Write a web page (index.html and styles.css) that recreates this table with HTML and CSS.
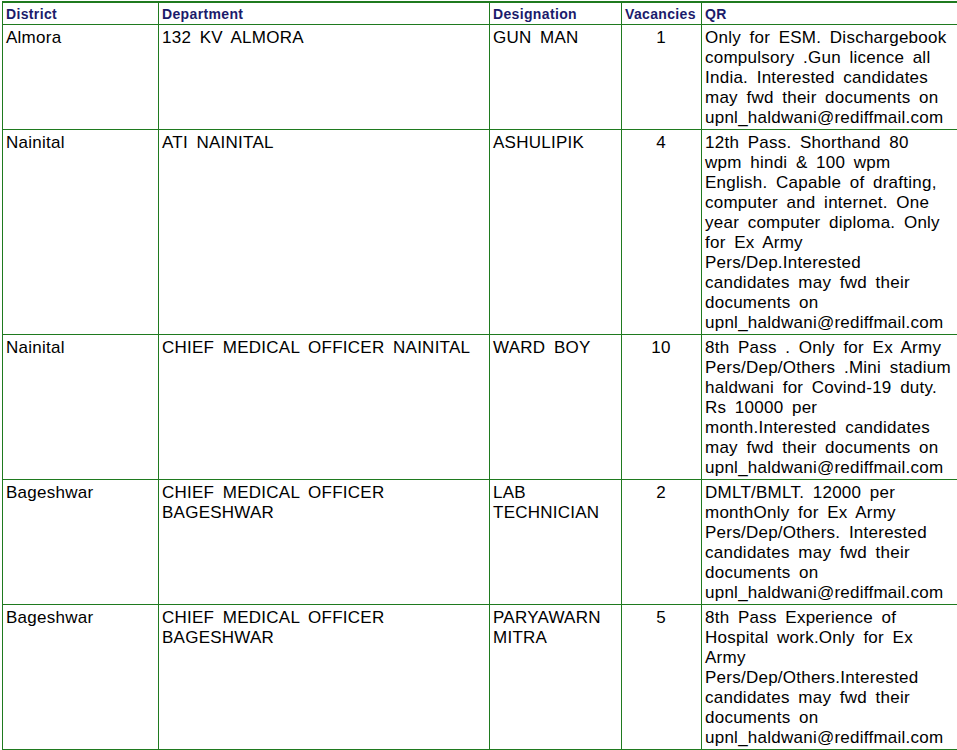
FILE: index.html
```html
<!DOCTYPE html>
<html lang="en">
<head>
<meta charset="utf-8">
<title>Vacancies</title>
<link rel="stylesheet" href="styles.css">
</head>
<body>
<table class="jobs">
  <thead>
    <tr>
      <th class="c-district">District</th>
      <th class="c-dept">Department</th>
      <th class="c-desig">Designation</th>
      <th class="c-vac">Vacancies</th>
      <th class="c-qr">QR</th>
    </tr>
  </thead>
  <tbody>
    <tr>
      <td>Almora</td>
      <td>132 KV ALMORA</td>
      <td>GUN MAN</td>
      <td class="num">1</td>
      <td>Only for ESM. Dischargebook compulsory .Gun licence all India. Interested candidates may fwd their documents on upnl_haldwani@rediffmail.com</td>
    </tr>
    <tr>
      <td>Nainital</td>
      <td>ATI NAINITAL</td>
      <td>ASHULIPIK</td>
      <td class="num">4</td>
      <td>12th Pass. Shorthand 80 wpm hindi &amp; 100 wpm English. Capable of drafting, computer and internet. One year computer diploma. Only for Ex Army Pers/Dep.Interested candidates may fwd their documents on upnl_haldwani@rediffmail.com</td>
    </tr>
    <tr>
      <td>Nainital</td>
      <td>CHIEF MEDICAL OFFICER NAINITAL</td>
      <td>WARD BOY</td>
      <td class="num">10</td>
      <td>8th Pass . Only for Ex Army Pers/Dep/Others .Mini stadium haldwani for Covind-19 duty. Rs 10000 per month.Interested candidates may fwd their documents on upnl_haldwani@rediffmail.com</td>
    </tr>
    <tr>
      <td>Bageshwar</td>
      <td>CHIEF MEDICAL OFFICER BAGESHWAR</td>
      <td>LAB TECHNICIAN</td>
      <td class="num">2</td>
      <td>DMLT/BMLT. 12000 per monthOnly for Ex Army Pers/Dep/Others. Interested candidates may fwd their documents on upnl_haldwani@rediffmail.com</td>
    </tr>
    <tr>
      <td>Bageshwar</td>
      <td>CHIEF MEDICAL OFFICER BAGESHWAR</td>
      <td>PARYAWARN MITRA</td>
      <td class="num">5</td>
      <td>8th Pass Experience of Hospital work.Only for Ex Army Pers/Dep/Others.Interested candidates may fwd their documents on upnl_haldwani@rediffmail.com</td>
    </tr>
  </tbody>
</table>
</body>
</html>
```
FILE: styles.css
```css
html, body {
  margin: 0;
  padding: 0;
  background: #ffffff;
  overflow: hidden;
}

.jobs {
  margin: 1px 0 0 2px;
  width: 955px;
  table-layout: fixed;
  border-collapse: separate;
  border-spacing: 0;
  border-top: 2px solid #1f7a1f;
  font-family: "Liberation Sans", Arial, sans-serif;
}

.jobs th,
.jobs td {
  box-sizing: border-box;
  border-left: 1px solid #1f7a1f;
  border-bottom: 1px solid #1f7a1f;
  text-align: left;
  vertical-align: top;
}

.jobs th {
  font-size: 14px;
  font-weight: bold;
  line-height: 18px;
  color: #1b1b6b;
  padding: 2px 3px 1px;
  letter-spacing: 0.35px;
  white-space: nowrap;
}

.jobs td {
  font-size: 17px;
  line-height: 20px;
  color: #000000;
  padding: 3px 4px 1px 3px;
  letter-spacing: 0.25px;
  word-spacing: 3.6px;
}

.jobs td.num {
  text-align: center;
}

.c-district { width: 156px; }
.c-dept { width: 331px; }
.c-desig { width: 132px; }
.c-vac { width: 80px; }
.c-qr { width: 256px; }
```
